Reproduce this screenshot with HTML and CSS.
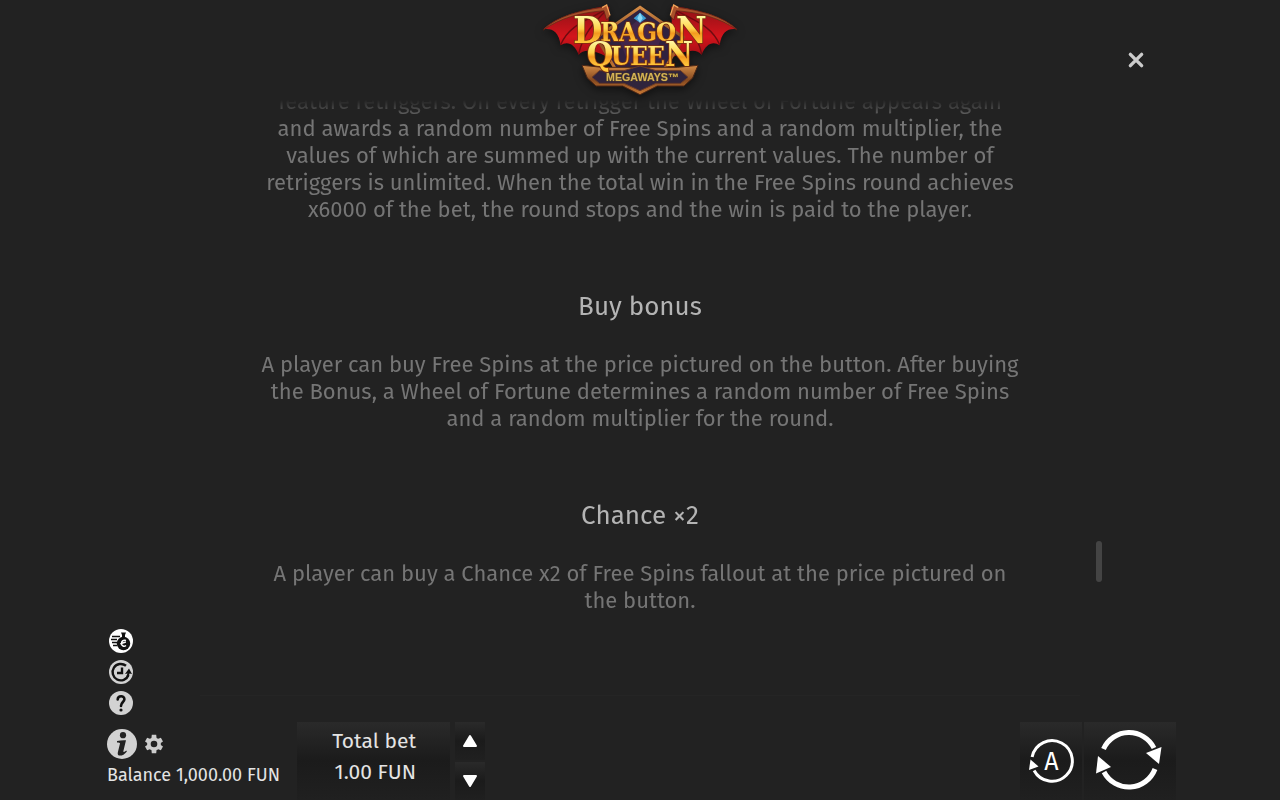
FILE: index.html
```html
<!DOCTYPE html>
<html lang="en">
<head>
    <meta charset="UTF-8">
    <meta name="viewport" content="width=device-width, initial-scale=1">
    <title>Dragon Queen Megaways</title>
    <link rel="stylesheet" href="styles.css">
</head>
<body>
    <header class="header">
        <svg class="logo" viewBox="0 0 660 315" role="img" aria-label="Dragon Queen Megaways">
            <defs>
                <linearGradient id="gold" x1="0" y1="0" x2="0" y2="1">
                    <stop offset="0.2" stop-color="#fff7a0"/>
                    <stop offset="0.48" stop-color="#ffd34a"/>
                    <stop offset="0.58" stop-color="#f39a1f"/>
                    <stop offset="0.8" stop-color="#ffc83c"/>
                </linearGradient>
                <linearGradient id="wing" x1="0" y1="0" x2="0" y2="1">
                    <stop offset="0" stop-color="#8d1116"/>
                    <stop offset="0.6" stop-color="#d3141c"/>
                    <stop offset="1" stop-color="#a30d14"/>
                </linearGradient>
                <linearGradient id="bronze" x1="0" y1="0" x2="0" y2="1">
                    <stop offset="0" stop-color="#d28a45"/>
                    <stop offset="0.5" stop-color="#85491f"/>
                    <stop offset="1" stop-color="#c97a35"/>
                </linearGradient>
                <g id="leftWing">
                    <path d="M238 20 L214 20 C150 32 80 48 40 88 C66 84 86 94 92 136 C112 122 134 132 146 164 C162 146 190 150 230 170 Z" fill="url(#wing)"/>
                    <path d="M230 26 C180 60 120 70 92 134 M230 30 C190 70 160 100 146 162" fill="none" stroke="#6e0b10" stroke-width="4"/>
                    <path d="M240 48 L230 14 L217 22 C150 32 80 48 40 90 C90 54 150 38 222 32 L230 60 Z" fill="#a8502a" stroke="#5b2313" stroke-width="2"/>
                    <path d="M216 23 L230 15 L240 46" fill="none" stroke="#f2a65b" stroke-width="4"/>
                </g>
            </defs>
            <use href="#leftWing"/>
            <use href="#leftWing" transform="translate(661 0) scale(-1 1)"/>
            <path d="M330 22 L460 112 L400 214 H260 L200 112 Z" fill="#30213f" stroke="url(#bronze)" stroke-width="9"/>
            <path d="M330 55 L395 110 L365 190 H295 L265 110 Z" fill="#42264b"/>
            <path d="M330 38 L349 55 L330 68 L311 55 Z" fill="#3c9ed6"/>
            <path d="M330 38 L338 55 L330 68 L322 55 Z" fill="#8ad8f5"/>
            <path d="M156 196 L218 202 H442 L504 196 L488 234 L462 258 H382 L330 284 L278 258 H198 L172 234 Z" fill="url(#bronze)" stroke="#4c2716" stroke-width="3"/>
            <path d="M186 232 L208 212 H282 L330 198 L378 212 H452 L474 232 L452 250 H378 L330 272 L282 250 H208 Z" fill="#30243c" stroke="#693a27" stroke-width="3"/>
            <g class="logo-letters">
                <text y="128"><tspan class="cap" x="130">D</tspan><tspan class="small" x="211 267 322 378" dy="-6">RAGO</tspan><tspan class="cap" x="438" dy="6">N</tspan></text>
                <text y="197"><tspan class="cap-low" x="170">Q</tspan><tspan class="small" x="243 301 352" dy="-3">UEE</tspan><tspan class="cap-low" x="405" dy="3">N</tspan></text>
            </g>
            <text class="logo-sub" x="337" y="244" text-anchor="middle">MEGAWAYS™</text>
        </svg>
        <button class="close" type="button" aria-label="Close">
            <svg viewBox="0 0 16 16"><path d="M3 3 L13 13 M13 3 L3 13"/></svg>
        </button>
    </header>

    <main class="main">
        <nav class="side" aria-label="Information">
            <button class="round active" type="button" aria-label="Buy bonus">
                <svg viewBox="0 0 24 24">
                    <path d="M12 3.5 H17 L16 6 V8 H13 V6 Z"/>
                    <circle cx="14.5" cy="14.5" r="6.7"/>
                    <path class="ink-line" d="M3 7.5 H11 M2 10.5 H8 M3 13.5 H8 M4 16.5 H8"/>
                    <path class="cut-line" d="M17 11.5 C14 10.5 12.5 12.5 12.5 14.5 C12.5 17 15 18 17 16.5 M11.3 14.8 L16.8 13"/>
                </svg>
            </button>
            <button class="round" type="button" aria-label="History">
                <svg viewBox="0 0 24 24">
                    <path class="ink-line bold" d="M17 5.8 A8.2 8.2 0 1 0 19.5 15"/>
                    <path class="ink-line bold" d="M13 7.5 V13 H8"/>
                    <path d="M16 14 L20 8.5 L23 14 L20.5 13.5 L19.5 17 L17.5 16 L18.5 13.5 Z"/>
                </svg>
            </button>
            <button class="round" type="button" aria-label="Help">
                <svg viewBox="0 0 24 24">
                    <path class="ink-line question" d="M8.7 8.5 C8.8 4.2 15.5 4.2 15.4 8.3 C15.4 11 12 11.2 12 15"/>
                    <circle cx="12" cy="19" r="1.6"/>
                </svg>
            </button>
        </nav>

        <article class="rules">
            <p>
                feature retriggers. On every retrigger the Wheel of Fortune appears again<br>
                and awards a random number of Free Spins and a random multiplier, the<br>
                values of which are summed up with the current values. The number of<br>
                retriggers is unlimited. When the total win in the Free Spins round achieves<br>
                x6000 of the bet, the round stops and the win is paid to the player.
            </p>
            <h2>Buy bonus</h2>
            <p>
                A player can buy Free Spins at the price pictured on the button. After buying<br>
                the Bonus, a Wheel of Fortune determines a random number of Free Spins<br>
                and a random multiplier for the round.
            </p>
            <h2>Chance ×2</h2>
            <p>
                A player can buy a Chance x2 of Free Spins fallout at the price pictured on<br>
                the button.
            </p>
        </article>

        <div class="track"><div class="thumb"></div></div>
    </main>

    <footer class="footer">
        <div class="account">
            <div class="tools">
                <button class="info" type="button" aria-label="Info">
                    <svg viewBox="0 0 30 30">
                        <circle cx="16" cy="6.2" r="3.1"/>
                        <path d="M10 12 C13 11.2 16 11 19 11.2 L16.4 22 C16.2 23.6 17.2 23.2 19.2 21.5 L19.9 22.4 C16 27.6 9.8 28 10.8 23.4 L13 14.4 C13 13.4 11.8 13.4 10 13.4 Z"/>
                    </svg>
                </button>
                <button class="gear" type="button" aria-label="Settings">
                    <svg viewBox="0 0 24 24">
                        <path fill-rule="evenodd" d="M19.4 13c.1-.3.1-.7.1-1s0-.7-.1-1l2.4-1.8-2.3-4-2.9 1.2c-.5-.4-1.1-.7-1.8-1L14.4 2H9.6l-.4 3.4c-.7.3-1.3.6-1.8 1L4.5 5.2l-2.3 4L4.6 11c-.1.3-.1.7-.1 1s0 .7.1 1l-2.4 1.8 2.3 4 2.9-1.2c.5.4 1.1.7 1.8 1l.4 3.4h4.8l.4-3.4c.7-.3 1.3-.6 1.8-1l2.9 1.2 2.3-4zM12 15.6a3.6 3.6 0 1 1 0-7.2 3.6 3.6 0 0 1 0 7.2z"/>
                    </svg>
                </button>
            </div>
            <div class="balance">Balance 1,000.00 FUN</div>
        </div>

        <div class="bet">
            <span>Total bet</span>
            <span>1.00 FUN</span>
        </div>
        <div class="stepper">
            <button type="button" aria-label="Increase bet">
                <svg viewBox="0 0 16 14"><path d="M8 2 L14 12 H2 Z"/></svg>
            </button>
            <button type="button" aria-label="Decrease bet">
                <svg viewBox="0 0 16 14"><path d="M8 12 L2 2 H14 Z"/></svg>
            </button>
        </div>

        <div class="play">
            <button class="auto" type="button" aria-label="Autoplay">
                <svg viewBox="0 0 48 48">
                    <path class="ring" d="M5.1 20 A20.3 20.3 0 1 1 7.1 33.5"/>
                    <path d="M3.5 22.5 L11.5 29.5 L2 33 Z"/>
                    <text x="24.5" y="33" text-anchor="middle">A</text>
                </svg>
            </button>
            <button class="spin" type="button" aria-label="Spin">
                <svg viewBox="0 0 72 72">
                    <path class="ring" d="M9.5 24 A28 28 0 0 1 60 23"/>
                    <path class="ring" d="M61 44 A28 28 0 0 1 10 47"/>
                    <path d="M52 28 L67.5 22 L65 39 Z"/>
                    <path d="M4 31 L17 42 L2 48.5 Z"/>
                </svg>
            </button>
        </div>
    </footer>
</body>
</html>
```
FILE: styles.css
```css
* {
    box-sizing: border-box;
}
body {
    display: flex;
    flex-direction: column;
    height: 100vh;
    margin: 0;
    overflow: hidden;
    background-color: #222;
    color: #e4e4e4;
    font-family: "Fira Sans", "Noto Sans", sans-serif;
}
button {
    display: flex;
    align-items: center;
    justify-content: center;
    padding: 0;
    border: none;
    background: none;
    color: #fff;
    font: inherit;
    cursor: pointer;
}
svg {
    display: block;
    fill: currentColor;
}

.header, .main {
    display: grid;
    grid-template-columns: 1fr minmax(0, 880px) 1fr;
}
.header {
    flex: none;
    height: 100px;
}
.logo {
    grid-column: 2;
    justify-self: center;
    width: 220px;
    height: 105px;
    overflow: visible;
    filter: drop-shadow(0 3px 4px #111);
}
.logo-letters {
    font-family: "DejaVu Serif Condensed", "DejaVu Serif", serif;
    font-weight: bold;
    fill: url(#gold);
    stroke: #7b3210;
    stroke-width: 5px;
    paint-order: stroke;
}
.cap {
    font-size: 112px;
}
.cap-low {
    font-size: 102px;
}
.small {
    font-size: 77px;
}
.logo-sub {
    font-family: "Liberation Sans", sans-serif;
    font-size: 32px;
    font-weight: bold;
    fill: #d3b257;
    stroke: #68501c;
    stroke-width: 2px;
    paint-order: stroke;
}
.close {
    width: 32px;
    height: 32px;
    margin: 44px 0 0 40px;
    color: #ccc;
}
.close svg {
    width: 18px;
    height: 18px;
    stroke: currentColor;
    stroke-width: 3;
    stroke-linecap: round;
}

.main {
    flex: 1;
    min-height: 0;
}
.side {
    display: flex;
    flex-direction: column;
    justify-content: flex-end;
    gap: 7px;
    padding: 0 0 7px 109px;
}
.round {
    width: 24px;
    height: 24px;
    border-radius: 50%;
    background-color: #d2d2d2;
    color: #111;
}
.round.active {
    background-color: #fff;
}
.round svg {
    width: 24px;
    height: 24px;
}
.ink-line, .cut-line {
    fill: none;
    stroke: #111;
    stroke-width: 1.6;
}
.bold {
    stroke-width: 2.4;
}
.question {
    stroke-width: 2.6;
    stroke-linecap: round;
}
.cut-line {
    stroke: #fff;
    stroke-width: 1.4;
}

.rules {
    display: flex;
    flex-direction: column;
    justify-content: flex-end;
    min-height: 0;
    margin-bottom: 26px;
    padding-bottom: 81px;
    overflow: hidden;
    border-bottom: 1px solid #252525;
    text-align: center;
    -webkit-mask-image: linear-gradient(transparent, #000 20px);
    mask-image: linear-gradient(transparent, #000 20px);
}
.rules p {
    margin: 0;
    color: #757575;
    font-size: 22px;
    line-height: 27px;
}
.rules h2 {
    margin: 68px 0 28px;
    color: #b4b4b4;
    font-size: 26px;
    font-weight: normal;
    line-height: 32px;
}
.track {
    position: relative;
    width: 6px;
    margin: 0 0 26px 16px;
}
.thumb {
    position: absolute;
    top: 74%;
    width: 6px;
    height: 41px;
    border-radius: 3px;
    background-color: #444;
}

.footer {
    display: flex;
    flex: none;
    height: 78px;
    padding: 0 104px 0 107px;
}
.account {
    width: 190px;
    padding-top: 7px;
}
.tools {
    display: flex;
    align-items: center;
    gap: 6px;
}
.info {
    width: 30px;
    height: 30px;
    border-radius: 50%;
    background-color: #d2d2d2;
    color: #222;
}
.info svg {
    width: 30px;
    height: 30px;
}
.gear {
    color: #ccc;
}
.gear svg {
    width: 22px;
    height: 22px;
}
.balance {
    margin-top: 4px;
    font-size: 18px;
    line-height: 24px;
    white-space: nowrap;
}
.bet, .stepper button, .play button {
    background: linear-gradient(#2a2a2a, #1b1b1b 50%, #202020);
}
.bet {
    display: flex;
    flex-direction: column;
    align-items: flex-end;
    width: 153px;
    padding: 4px 34px 0 0;
    font-size: 21px;
    line-height: 31px;
    white-space: nowrap;
}
.stepper {
    display: flex;
    flex-direction: column;
    gap: 2px;
    width: 30px;
    margin-left: 5px;
}
.stepper button {
    flex: 1;
}
.stepper svg {
    width: 16px;
    height: 14px;
    stroke: currentColor;
    stroke-width: 2;
    stroke-linejoin: round;
}
.play {
    display: flex;
    gap: 2px;
    margin-left: auto;
}
.auto {
    width: 62px;
}
.auto svg {
    width: 48px;
    height: 48px;
    font-size: 25px;
}
.spin {
    width: 92px;
}
.spin svg {
    width: 72px;
    height: 72px;
}
.ring {
    fill: none;
    stroke: currentColor;
    stroke-width: 3;
}
.spin .ring {
    stroke-width: 5;
}
```
